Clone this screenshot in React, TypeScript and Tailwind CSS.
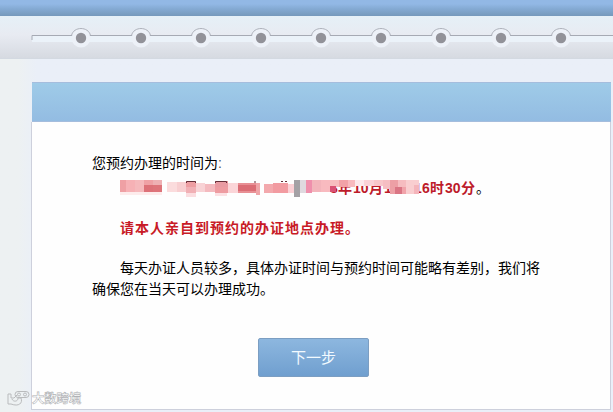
const textFont = "font-['Liberation_Sans','Noto_Sans_CJK_SC',sans-serif]";

const steps = [80, 140, 200, 260, 320, 380, 440, 500, 560];

// x, y, width, height, colour of each censoring block, relative to the row
const blocks: [number, number, number, number, string][] = [
  [0, 0, 6, 12, "#efa0a4"], [6, 0, 9, 12, "#f6b1b5"], [15, 0, 9, 12, "#f5b9bc"],
  [24, 0, 9, 5, "#efa1a5"], [24, 5, 9, 7, "#dd7178"], [33, 0, 9, 5, "#eeb0b3"], [33, 5, 9, 7, "#de747a"],
  [0, 12, 42, 3, "#fdecec"],
  [47, 2, 10, 10, "#fbdcdd"], [57, 2, 9, 10, "#f8cfd1"], [66, 1, 10, 6, "#ee9ea2"], [66, 7, 10, 6, "#f1b0b5"],
  [76, 3, 9, 9, "#f8d2d5"], [85, 4, 10, 8, "#f4babf"], [95, 1, 13, 6, "#e99ba2"], [95, 7, 13, 6, "#ee9ca1"],
  [66, 13, 10, 4, "#fbdde0"], [95, 13, 12, 3, "#fce1e4"], [108, 3, 10, 10, "#fbd5d8"],
  [118, 3, 18, 10, "#e88f94"], [118, 5, 18, 6, "#db6d75"], [136, 3, 4, 12, "#efa5a8"],
  [144, 4, 9, 9, "#f3a9ad"], [153, 3, 15, 10, "#f29ba1"], [168, 4, 6, 9, "#fbd0d5"],
  [174, 0, 6, 17, "#a4a1a5"], [180, 0, 6, 13, "#dfd9df"], [186, 0, 6, 13, "#ef8fac"],
  [192, 0, 9, 12, "#f3b4bb"], [201, 0, 9, 12, "#f8babf"], [210, 0, 9, 7, "#f7bdc0"],
  [210, 6, 6, 6, "#d95174"], [219, 0, 9, 7, "#f2a2a7"], [228, 0, 7, 7, "#f8babe"],
  [235, 0, 9, 6, "#fce8eb"], [244, 0, 10, 6, "#fad2d7"], [254, 0, 9, 6, "#f8c7ca"],
  [263, 0, 7, 9, "#f6bec3"], [270, 0, 8, 14, "#ed9fa5"], [275, 7, 7, 7, "#da7584"],
  [278, 0, 8, 7, "#f6bcc0"], [282, 7, 6, 7, "#f1a3aa"], [286, 0, 13, 14, "#f9ced0"],
  [294, 5, 5, 9, "#f4b5bb"],
];

function Header() {
  return (
    <header>
      <div className="h-4 bg-linear-to-b from-[#92b8e5] from-25% via-[#84aad3] via-55% to-[#7599bb]" />
      <div className="h-[43px] border-b border-[#d3d9e1] bg-linear-to-b from-[#e5f0f7] via-[#e8ebf2] via-45% to-[#d6dae1]">
        <svg width="613" height="42" viewBox="0 0 613 42" aria-hidden="true">
          <rect x="32" y="20" width="581" height="6" fill="#ebf2f9" />
          <path d="M32 24V19.5H613" fill="none" stroke="#a6aab4" />
          {steps.map((x) => (
            <g key={x} transform={`translate(${x + 1} 22)`}>
              <circle r="9.4" fill="#edf1f8" />
              <path d="M-9.5-2.5C-7.5-11.8 7.5-11.8 9.5-2.5" fill="none" stroke="#aeb2bb" />
              <circle r="5.2" fill="#929299" />
            </g>
          ))}
        </svg>
      </div>
    </header>
  );
}

function AppointmentTime() {
  return (
    <div className="relative -ml-px mt-[4px] flex h-[21px] items-center pl-[239px] text-[14px] font-bold leading-[21px] text-[#bd1b2a]">
      <span className="w-2">8</span>
      <span className="w-[15px]">年</span>
      <span className="w-4">10</span>
      <span className="w-[15px]">月</span>
      <span className="w-[30px]">1</span>
      <span className="w-2">1</span>
      <span className="w-2">6</span>
      <span className="w-[15px]">时</span>
      <span className="w-4">30</span>
      <span className="w-[15px]">分</span>
      <span className="font-normal text-black">。</span>
      <svg className="absolute left-[29px] top-[2px]" width="302" height="18" aria-hidden="true">
        {blocks.map(([x, y, w, h, fill], i) => (
          <rect key={i} x={x} y={y} width={w} height={h} fill={fill} />
        ))}
        <path d="M66.5 3V1.5H75.5V3M95.5 3V1.5H106.5V3M135 3V1M161 1.5H163M165 1.5H167" fill="none" stroke="#653039" />
      </svg>
    </div>
  );
}

function Watermark() {
  return (
    <div className="absolute left-[7px] top-[390px] flex items-center gap-[2px]">
      <svg width="23" height="17" fill="none" stroke="#b9bbbd" strokeWidth="1" aria-hidden="true">
        <path d="M4 4H1V14H4M4 4V8H7L10 5M4 14C12 17 16 13 14 8H11C11 12 6 12 5 9" />
        <rect x="8" y="1.5" width="14" height="6" rx="3" />
        <circle cx="12" cy="4.5" r="1.5" />
        <circle cx="18" cy="4.5" r="1.5" />
      </svg>
      <span className="font-['Noto_Sans_CJK_SC',sans-serif] text-[12.3px] font-bold leading-[17px] text-white [-webkit-text-stroke:0.6px_#b0b2b5]">
        大数跨境
      </span>
    </div>
  );
}

export default function App() {
  return (
    <div className={`relative h-[412px] w-[613px] overflow-hidden bg-linear-to-r from-[#edf1f2] from-3% to-[#eaeff8] to-6% ${textFont}`}>
      <Header />
      <main className="ml-[31px] mt-[23px] w-[580px]">
        <div className="ml-px h-10 border-y border-[#a5bddd] bg-linear-to-b from-[#9fcbe8] to-[#93bce2]" />
        <section className="flex h-[288px] flex-col border border-t-0 border-[#cdd0dc] bg-[#fefefe] pl-[60px] pt-[31px] text-[14px] leading-[21px] text-black">
          <p>
            您预约办理的时间为<span className="text-[#555]">:</span>
          </p>
          <AppointmentTime />
          <p className="mt-[19px] pl-7 font-bold tracking-[1px] text-[#c81a26]">请本人亲自到预约的办证地点办理。</p>
          <p className="mt-[19px] w-[448px] indent-7">
            每天办证人员较多，具体办证时间与预约时间可能略有差别，我们将
            <br />
            确保您在当天可以办理成功。
          </p>
          <button className="ml-[166px] mt-[38px] h-[39px] w-[111px] rounded-[2px] border border-[#7c9ec2] bg-linear-to-b from-[#8db7df] to-[#709fcf] text-[15px] leading-5 text-[#f2faff]">
            下一步
          </button>
        </section>
      </main>
      <Watermark />
    </div>
  );
}
